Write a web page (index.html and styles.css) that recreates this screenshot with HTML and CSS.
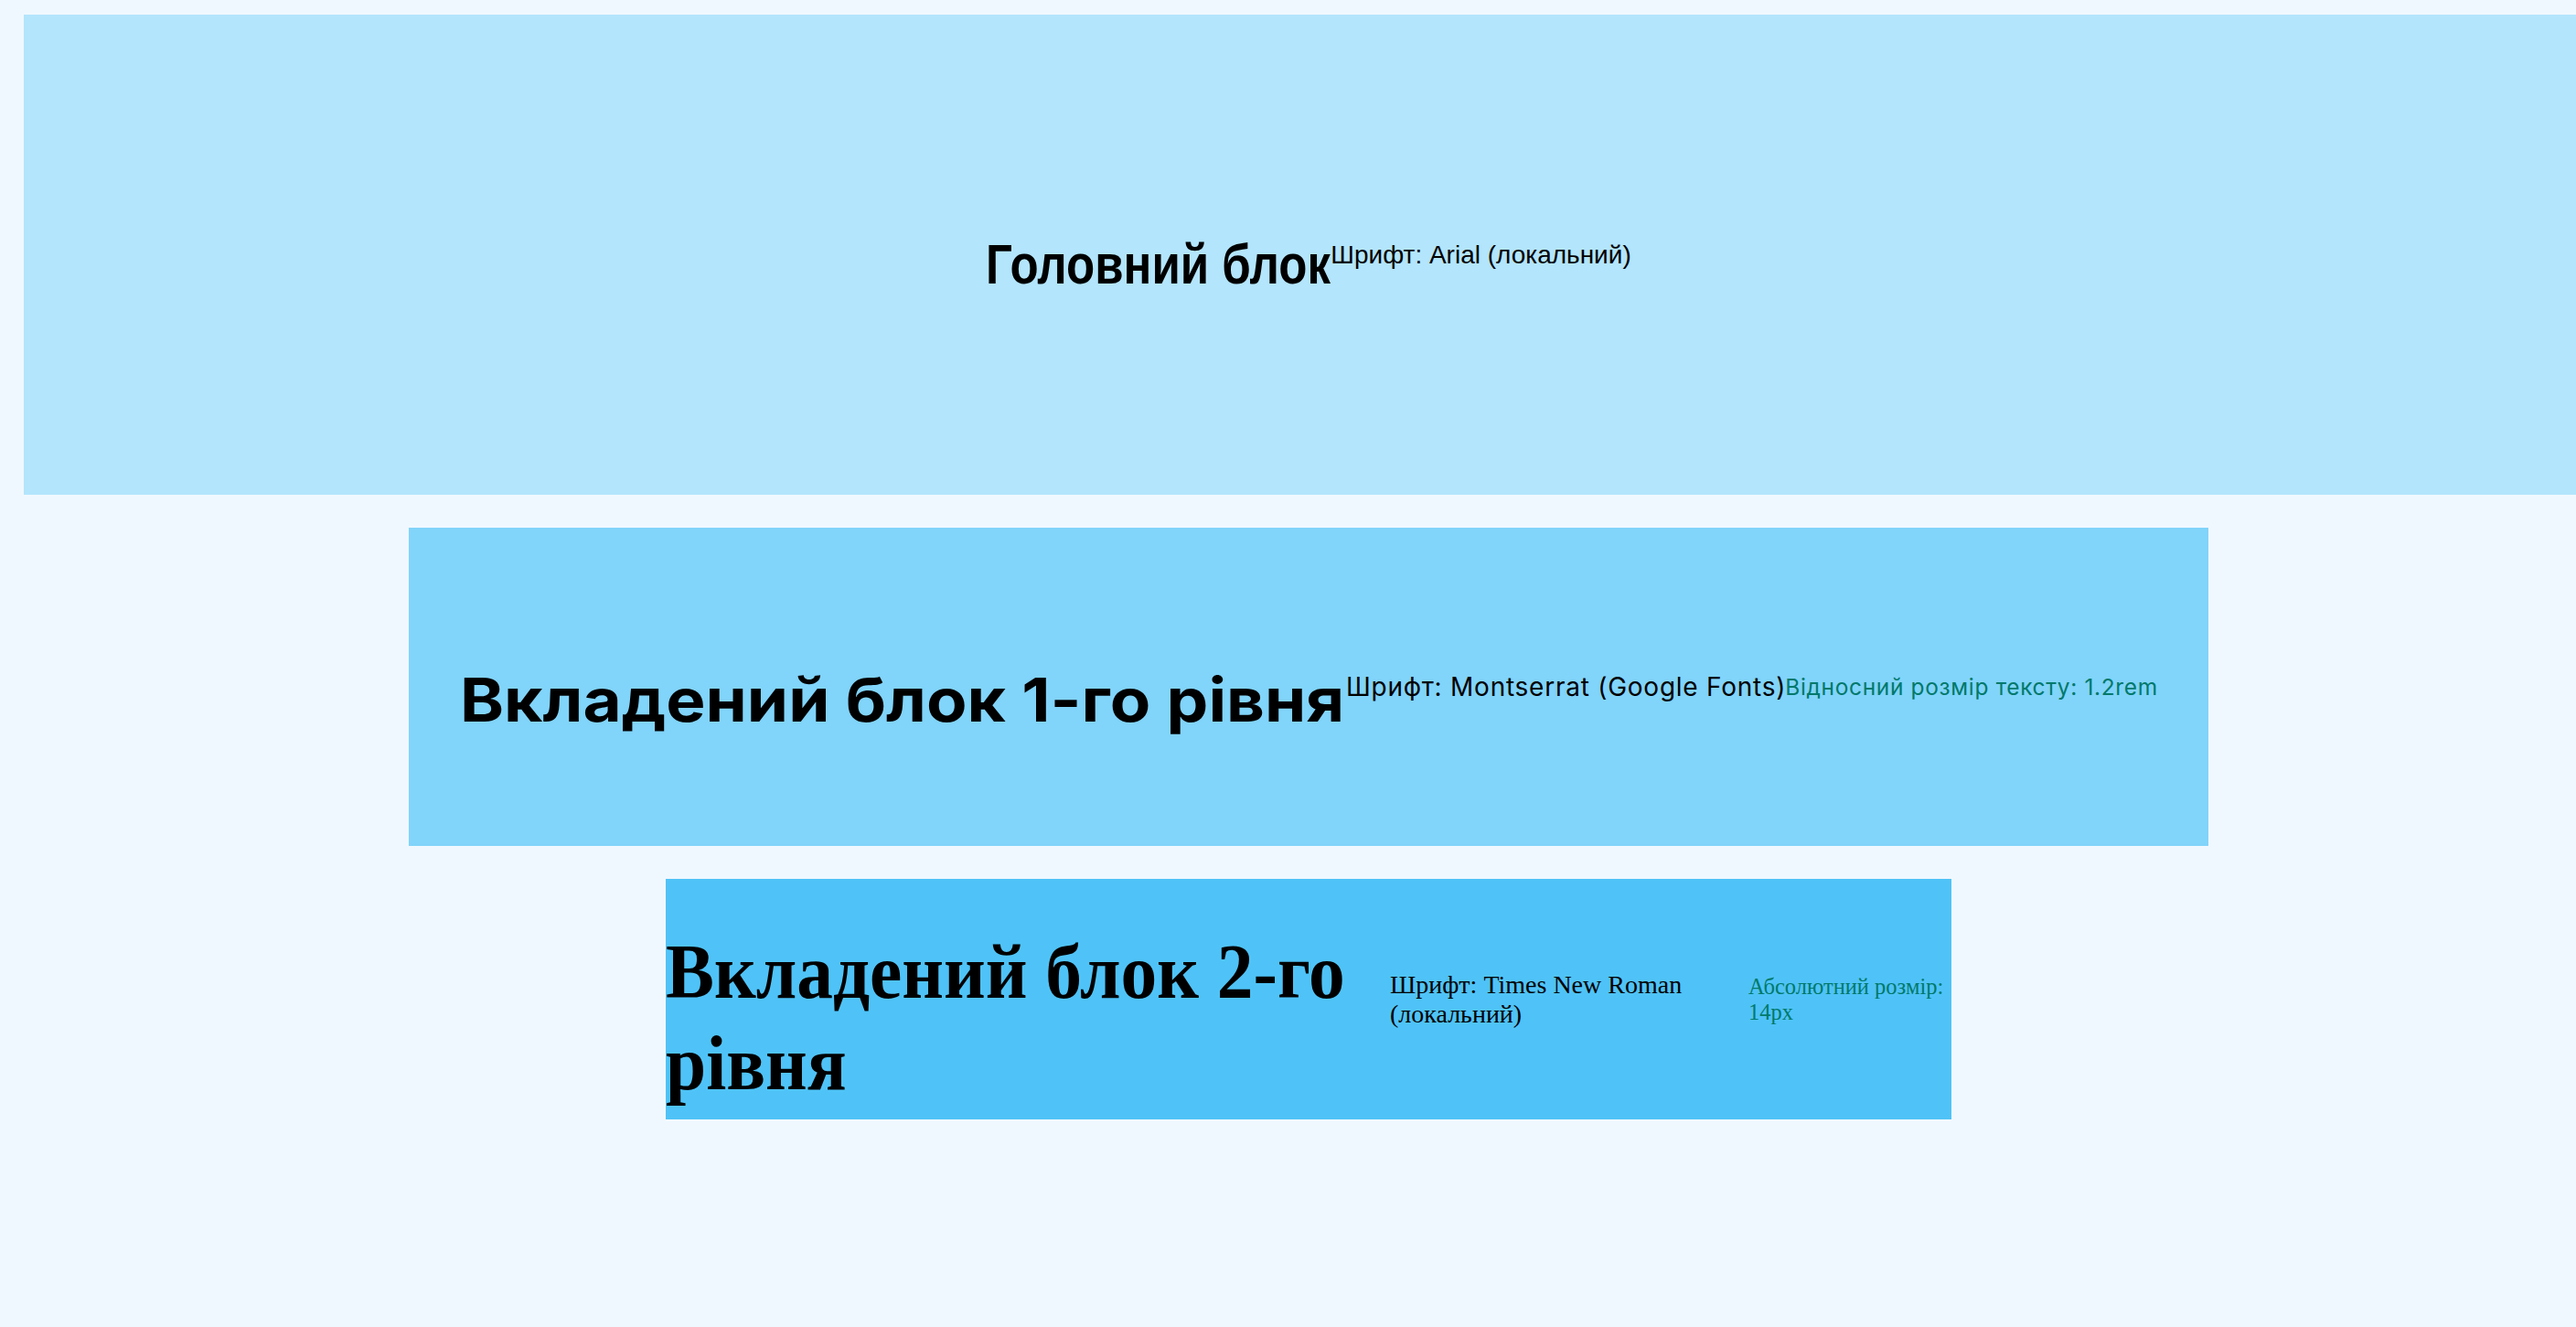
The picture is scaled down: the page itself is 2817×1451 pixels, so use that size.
FILE: index.html
```html
<!DOCTYPE html>
<html lang="uk">
<head>
<meta charset="utf-8">
<title>Вкладені блоки</title>
<link rel="stylesheet" href="styles.css">
</head>
<body>
<div class="page">
  <section class="block block-main">
    <h1 class="title-main"><span class="squeeze">Головний блок</span></h1>
    <p class="note-main">Шрифт: Arial (локальний)</p>
  </section>
  <section class="block block-one">
    <h2 class="title-one"><span class="stretch">Вкладений блок 1-го рівня</span></h2>
    <p class="note-one">Шрифт: Montserrat (Google Fonts)</p>
    <p class="size-one">Відносний розмір тексту: 1.2rem</p>
  </section>
  <section class="block block-two">
    <h3 class="title-two"><span class="squeeze-lines">Вкладений блок 2-го рівня</span></h3>
    <p class="note-two">Шрифт: Times New Roman (локальний)</p>
    <p class="size-two">Абсолютний розмір: 14px</p>
  </section>
</div>
</body>
</html>
```
FILE: styles.css
```css
html, body {
  margin: 0;
  padding: 0;
  overflow-x: hidden;
  background: #f0f8ff;
}

.page {
  width: 2810px;
  margin-left: 26px;
  padding-top: 16px;
  display: flex;
  flex-direction: column;
  align-items: center;
  gap: 36px;
}

.block {
  display: flex;
  flex-direction: row;
  align-items: center;
  box-sizing: border-box;
}

.block h1, .block h2, .block h3, .block p {
  margin: 0;
  min-width: 0;
}

/* Main block */
.block-main {
  width: 2810px;
  height: 525px;
  background: #b3e5fc;
  justify-content: center;
  font-family: "Liberation Sans", Arial, sans-serif;
}

.title-main {
  flex: 0 0 377px;
  font-family: "Liberation Sans", Arial, sans-serif;
  font-weight: 700;
  font-size: 62px;
  margin-top: 20px !important;
  white-space: nowrap;
}

.squeeze {
  display: inline-block;
  transform: scaleX(0.823);
  transform-origin: left center;
}

.note-main {
  font-size: 28px;
  white-space: nowrap;
}

/* Level 1 */
.block-one {
  width: 1968px;
  height: 348px;
  background: #81d4fa;
  padding: 0 56px;
  justify-content: flex-start;
  font-family: Inter, "Noto Sans", sans-serif;
}

.title-one {
  flex: 0 0 969px;
  font-weight: 700;
  font-size: 66px;
  margin-top: 28px !important;
  white-space: nowrap;
}

.stretch {
  display: inline-block;
  transform: scaleX(1.102);
  transform-origin: left center;
}

.note-one {
  font-size: 28px;
  letter-spacing: 0.75px;
  white-space: nowrap;
}

.size-one {
  font-size: 24.5px;
  letter-spacing: 0.65px;
  color: #00796b;
  white-space: nowrap;
}

/* Level 2 */
.block-two {
  width: 1406px;
  height: 263px;
  background: #4fc3f7;
  justify-content: flex-start;
  font-family: "Liberation Serif", "Times New Roman", serif;
}

.title-two {
  flex: 0 0 792px;
  font-weight: 700;
  font-size: 84px;
  line-height: 100px;
  margin-top: 40px !important;
}

.squeeze-lines {
  display: block;
  width: 838px;
  transform: scaleX(0.945);
  transform-origin: left center;
}

.note-two {
  flex: 0 0 392px;
  font-size: 28px;
}

.size-two {
  flex: 0 0 222px;
  font-size: 24.5px;
  color: #00796b;
}
```
